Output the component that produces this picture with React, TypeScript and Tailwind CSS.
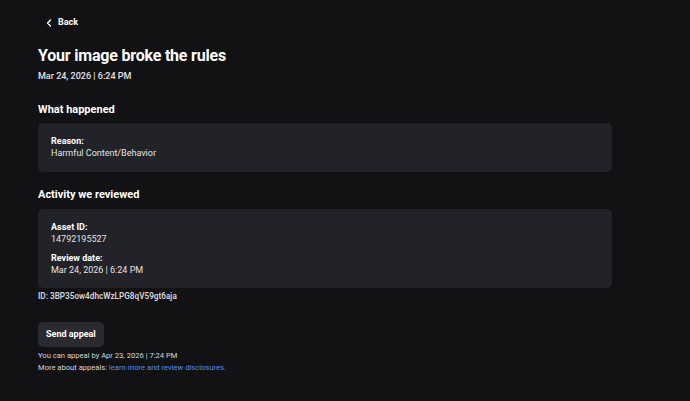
import React from "react";

export default function App() {
  return (
    <div
      className="min-h-screen w-full bg-[#121215] text-[#ececee]"
      style={{ fontFamily: "Roboto, 'Noto Sans', sans-serif" }}
    >
      <div className="pl-[38px] pt-[15px] w-[612px]">
        <button className="flex items-center gap-[6px] pl-[8px] h-[16px] text-[9px] font-bold text-white">
          <svg width="6" height="8" viewBox="0 0 6 8" fill="none">
            <path d="M4.5 1L1.5 4L4.5 7" stroke="white" strokeWidth="1.3" strokeLinecap="round" strokeLinejoin="round" />
          </svg>
          <span>Back</span>
        </button>

        <h1 className="mt-[14px] text-[16px] leading-[22px] font-bold tracking-[-0.2px] text-white">
          Your image broke the rules
        </h1>
        <div className="mt-[2px] text-[9px] leading-[14px] font-medium text-[#e2e2e5]">
          Mar 24, 2026 | 6:24 PM
        </div>

        <h2 className="mt-[19px] text-[11px] leading-[16px] font-bold text-white">What happened</h2>
        <div className="mt-[5px] rounded-[5px] bg-[#222328] px-[13px] pt-[12px] pb-[13px] w-[574px]">
          <div className="text-[9px] leading-[12px] font-bold text-white">Reason:</div>
          <div className="text-[9px] leading-[12px] text-[#e2e2e5]">Harmful Content/Behavior</div>
        </div>

        <h2 className="mt-[15px] text-[11px] leading-[16px] font-bold text-white">Activity we reviewed</h2>
        <div className="mt-[6px] rounded-[5px] bg-[#222328] px-[13px] pt-[12px] pb-[12px] w-[574px]">
          <div className="text-[9px] leading-[12px] font-bold text-white">Asset ID:</div>
          <div className="text-[9px] leading-[12px] text-[#e2e2e5]">14792195527</div>
          <div className="mt-[7px] text-[9px] leading-[12px] font-bold text-white">Review date:</div>
          <div className="text-[9px] leading-[12px] text-[#e2e2e5]">Mar 24, 2026 | 6:24 PM</div>
        </div>
        <div className="mt-[3px] text-[8.2px] leading-[11px] font-semibold text-[#d6d6da]">
          ID: 3BP35ow4dhcWzLPG8qV59gt6aja
        </div>

        <button className="mt-[20px] h-[25px] px-[8px] rounded-[5px] bg-[#2a2b30] text-[9px] font-bold text-white">
          Send appeal
        </button>
        <div className="mt-[3px] text-[7.6px] leading-[12px] text-[#d6d6da]">
          You can appeal by Apr 23, 2026 | 7:24 PM
        </div>
        <div className="text-[7.6px] leading-[12px] text-[#d6d6da]">
          More about appeals: <span className="text-[#4b8df8]">learn more and review disclosures.</span>
        </div>
      </div>
    </div>
  );
}
